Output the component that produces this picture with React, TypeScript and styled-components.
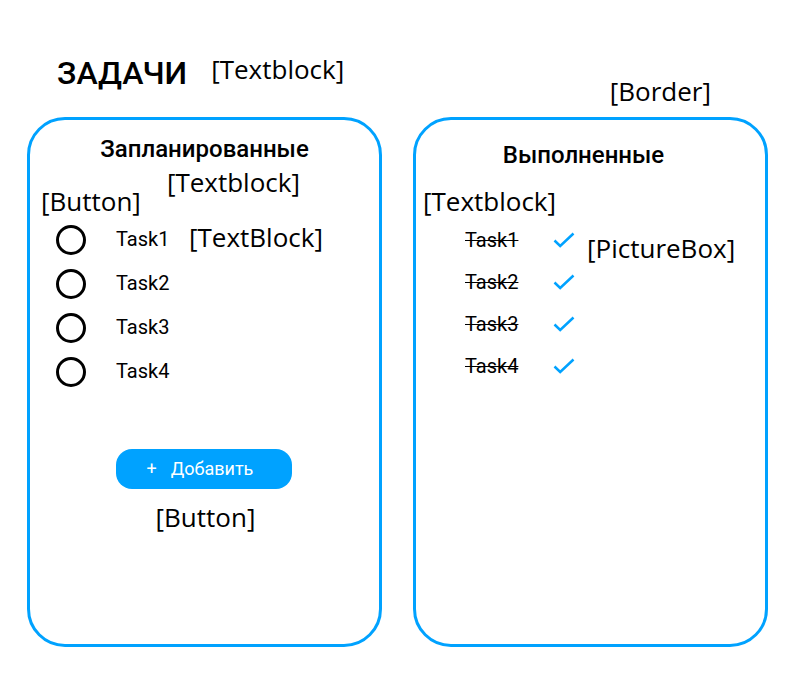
import React from "react";
import styled, { createGlobalStyle } from "styled-components";

const GlobalStyle = createGlobalStyle`
  * { box-sizing: border-box; }
  body { margin: 0; background: #fff; color: #000; font-family: Roboto, sans-serif; }
  h1, h2, ul { margin: 0; padding: 0; }
  ul { list-style: none; }
`;

const blue = "#00a2ff";

const Page = styled.main`
  min-height: 100vh;
  display: flex;
  flex-direction: column;
  padding: 51px 32px 53px 27px;
`;

const Header = styled.header`
  display: flex;
  justify-content: space-between;
  align-items: flex-start;
  padding: 0 57px 8px 30px;
`;

const TitleGroup = styled.div`
  display: flex;
  align-items: flex-start;
  gap: 24px;
`;

const Title = styled.h1`
  padding-top: 2px;
  font-size: 32px;
  line-height: 40px;
  font-weight: 500;
`;

const Note = styled.span<{ $top?: number; $left?: number; $line?: number }>`
  padding-top: ${(p) => p.$top ?? 0}px;
  padding-left: ${(p) => p.$left ?? 0}px;
  font-family: "Open Sans", sans-serif;
  font-size: 26px;
  line-height: ${(p) => p.$line ?? 36}px;
  white-space: nowrap;
`;

const Board = styled.div`
  flex: 1;
  display: grid;
  grid-template-columns: 1fr 1fr;
  gap: 31px;
`;

const Card = styled.section<{ $top: number }>`
  display: flex;
  flex-direction: column;
  padding: ${(p) => p.$top}px 0 24px;
  border: 3px solid ${blue};
  border-radius: 38px;
`;

const CardTitle = styled.h2<{ $shift?: number }>`
  padding-right: ${(p) => p.$shift ?? 0}px;
  font-size: 24px;
  line-height: 28px;
  font-weight: 500;
  text-align: center;
`;

const PlannedNotes = styled.div`
  display: flex;
  align-items: flex-start;
  gap: 26px;
  padding: 1px 0 6px 11px;
`;

const PlannedList = styled.ul`
  display: flex;
  flex-direction: column;
  gap: 14px;
  padding-left: 26px;
`;

const PlannedRow = styled.li`
  display: flex;
  align-items: flex-start;
  height: 30px;
`;

const CircleButton = styled.button`
  width: 30px;
  height: 30px;
  margin-right: 30px;
  padding: 0;
  border: 3px solid #000;
  border-radius: 50%;
  background: transparent;
  cursor: pointer;
`;

const TaskName = styled.span`
  width: 73px;
  font-size: 20px;
  line-height: 28px;
`;

const AddArea = styled.div`
  display: flex;
  flex-direction: column;
  align-items: center;
  gap: 10px;
  padding: 62px 2px 0 0;
`;

const AddButton = styled.button`
  display: flex;
  align-items: center;
  gap: 14px;
  width: 176px;
  height: 40px;
  padding: 0 0 0 31px;
  border: 0;
  border-radius: 16px;
  background: ${blue};
  color: #fff;
  font: 400 18px/22px Roboto, sans-serif;
  cursor: pointer;
`;

const DoneNotes = styled.div`
  padding: 14px 0 9px 7px;
  display: flex;
`;

const DoneArea = styled.div`
  display: flex;
  align-items: flex-start;
  gap: 12px;
  padding-left: 49px;
`;

const DoneList = styled.ul`
  display: flex;
  flex-direction: column;
  gap: 18px;
`;

const DoneRow = styled.li`
  display: flex;
  align-items: center;
  height: 24px;
`;

const DoneName = styled.s`
  width: 88px;
  font-size: 20px;
  line-height: 24px;
  text-decoration-thickness: 1px;
`;

const Check = () => (
  <svg width="22" height="16" viewBox="0 0 22 16" fill="none" role="img" aria-label="Выполнено">
    <path d="M1.5 8.5L7.2 14L20.5 1.5" stroke={blue} strokeWidth="2.5" />
  </svg>
);

const tasks = ["Task1", "Task2", "Task3", "Task4"];

export default function App() {
  return (
    <>
      <GlobalStyle />
      <Page>
        <Header>
          <TitleGroup>
            <Title>ЗАДАЧИ</Title>
            <Note>[Textblock]</Note>
          </TitleGroup>
          <Note $top={22}>[Border]</Note>
        </Header>
        <Board>
          <Card $top={15}>
            <CardTitle>Запланированные</CardTitle>
            <PlannedNotes>
              <Note $top={19}>[Button]</Note>
              <Note>[Textblock]</Note>
            </PlannedNotes>
            <PlannedList>
              {tasks.map((task, i) => (
                <PlannedRow key={task}>
                  <CircleButton type="button" aria-labelledby={`planned-${task}`} />
                  <TaskName id={`planned-${task}`}>{task}</TaskName>
                  {i === 0 && <Note $line={24}>[TextBlock]</Note>}
                </PlannedRow>
              ))}
            </PlannedList>
            <AddArea>
              <AddButton type="button">
                <span>+</span>
                <span>Добавить</span>
              </AddButton>
              <Note $left={4}>[Button]</Note>
            </AddArea>
          </Card>
          <Card $top={21}>
            <CardTitle $shift={14}>Выполненные</CardTitle>
            <DoneNotes>
              <Note>[Textblock]</Note>
            </DoneNotes>
            <DoneArea>
              <DoneList>
                {tasks.map((task) => (
                  <DoneRow key={task}>
                    <DoneName>{task}</DoneName>
                    <Check />
                  </DoneRow>
                ))}
              </DoneList>
              <Note $top={2}>[PictureBox]</Note>
            </DoneArea>
          </Card>
        </Board>
      </Page>
    </>
  );
}
